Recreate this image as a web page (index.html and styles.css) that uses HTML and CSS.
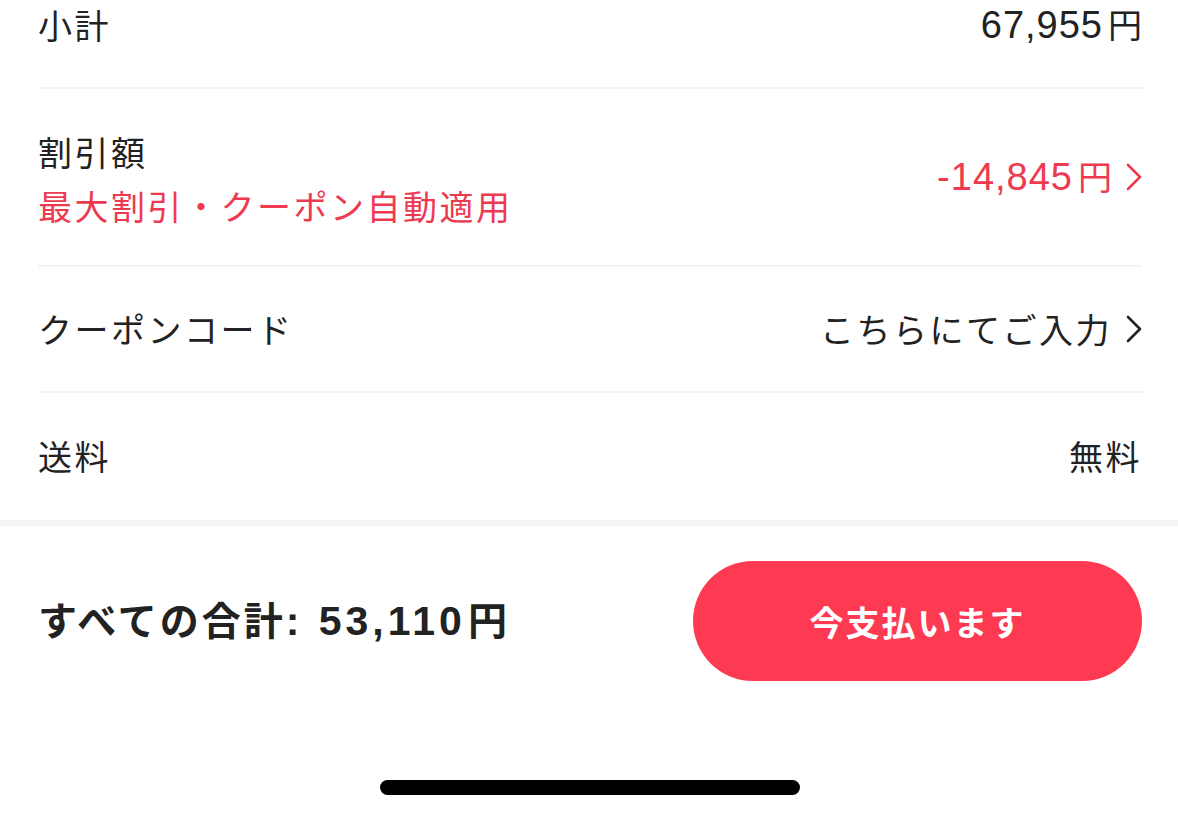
FILE: index.html
```html
<!DOCTYPE html>
<html lang="ja">
<head>
<meta charset="utf-8">
<link rel="stylesheet" href="styles.css">
</head>
<body>
<div class="page">
  <div class="list">
    <div class="row row-sub">
      <span class="label">小計</span>
      <span class="value"><span class="num">67,955</span><span class="yen">円</span></span>
    </div>
    <div class="row row-disc">
      <div class="label-group">
        <span class="label">割引額</span>
        <span class="label red">最大割引・クーポン自動適用</span>
      </div>
      <div class="value-group">
        <span class="value red"><span class="num">-14,845</span><span class="yen">円</span></span>
        <svg class="chev" width="16" height="28" viewBox="0 0 16 28"><polyline points="2,2 14,14 2,26" fill="none" stroke="#ee3a50" stroke-width="2.6" stroke-linecap="round" stroke-linejoin="round"/></svg>
      </div>
    </div>
    <div class="row row-std">
      <span class="label">クーポンコード</span>
      <div class="value-group">
        <span class="value">こちらにてご入力</span>
        <svg class="chev" width="16" height="28" viewBox="0 0 16 28"><polyline points="2,2 14,14 2,26" fill="none" stroke="#222" stroke-width="2.6" stroke-linecap="round" stroke-linejoin="round"/></svg>
      </div>
    </div>
    <div class="row row-std last">
      <span class="label">送料</span>
      <span class="value">無料</span>
    </div>
  </div>
  <div class="band"></div>
  <div class="footer">
    <div class="total"><span class="total-jp">すべての合計</span><span class="total-num">: 53,110</span><span class="total-yen">円</span></div>
    <button class="pay">今支払います</button>
  </div>
  <div class="home-wrap"><div class="home"></div></div>
</div>
</body>
</html>
```

FILE: styles.css
```css
* { box-sizing: border-box; }
html, body {
  margin: 0;
  padding: 0;
  background: #fff;
  overflow: hidden;
}
body {
  font-family: "Noto Sans CJK JP", "Noto Sans", sans-serif;
  color: #222;
  width: 1178px;
  height: 818px;
}
.page {
  width: 1178px;
  height: 818px;
  overflow: hidden;
}
.list {
  margin-top: -36px;
  padding: 0 36px 0 38px;
}
.row {
  display: flex;
  align-items: center;
  justify-content: space-between;
  border-bottom: 2px solid #f2f2f2;
}
.row.last { border-bottom: none; }
.row-sub { height: 125px; }
.row-disc { height: 178px; }
.row-std { height: 126px; }
.row.last { height: 127px; }
.label, .value {
  font-size: 34px;
  letter-spacing: 2.5px;
  line-height: 1.6;
  font-weight: 400;
  white-space: nowrap;
}
.value {
  display: flex;
  align-items: baseline;
}
.label-group {
  display: flex;
  flex-direction: column;
  padding-top: 4px;
}
.label-group .label { line-height: 54px; }
.red { color: #ee3a50; }
.num {
  font-family: "Liberation Sans", Arial, sans-serif;
  font-size: 38px;
  letter-spacing: 1px;
}
.yen {
  margin-left: 5px;
  letter-spacing: 0;
}
.value-group {
  display: flex;
  align-items: center;
  gap: 14px;
}
.chev { display: block; }
.band {
  height: 6px;
  background: #f4f4f4;
}
.footer {
  display: flex;
  align-items: center;
  justify-content: space-between;
  padding: 35px 36px 0 38px;
}
.total {
  display: flex;
  align-items: baseline;
  font-weight: 700;
  white-space: nowrap;
  margin-top: -6px;
}
.total-jp {
  font-size: 39px;
  letter-spacing: 3px;
}
.total-num {
  font-family: "Liberation Sans", Arial, sans-serif;
  font-size: 41px;
  letter-spacing: 4px;
}
.total-yen {
  font-size: 39px;
  margin-left: 2px;
}
.pay {
  width: 449px;
  height: 120px;
  border: none;
  border-radius: 60px;
  background: #fe3a52;
  color: #fff;
  font-family: "Noto Sans CJK JP", sans-serif;
  font-size: 34px;
  font-weight: 700;
  letter-spacing: 2px;
  padding: 0;
}
.home-wrap {
  display: flex;
  justify-content: center;
  padding-top: 99px;
  padding-left: 2px;
}
.home {
  width: 420px;
  height: 15px;
  border-radius: 8px;
  background: #000;
}
```
